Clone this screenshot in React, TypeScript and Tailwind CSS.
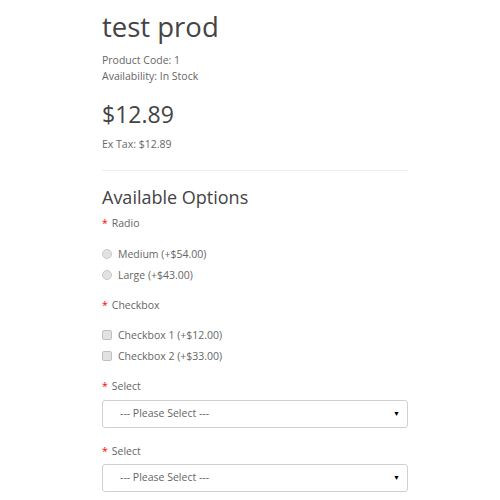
import React from "react";

const font = { fontFamily: '"Open Sans", "Liberation Sans", sans-serif' };

function Required({ label }: { label: string }) {
  return (
    <div className="text-[10.5px] leading-[16px] text-[#666]">
      <span className="text-[#f00] mr-[4px]">*</span>
      {label}
    </div>
  );
}

function Radio({ label }: { label: string }) {
  return (
    <div className="flex items-center h-[16px] text-[10.5px] leading-[16px] text-[#666]">
      <span className="w-[10px] h-[10px] rounded-full bg-[#e2e2e2] border border-[#c8c8c8] mr-[6px] -mt-[1px]" />
      {label}
    </div>
  );
}

function Checkbox({ label }: { label: string }) {
  return (
    <div className="flex items-center h-[16px] text-[10.5px] leading-[16px] text-[#666]">
      <span className="w-[10px] h-[10px] rounded-[2px] bg-[#e2e2e2] border border-[#c0c0c0] mr-[6px]" />
      {label}
    </div>
  );
}

function Select() {
  return (
    <div className="flex items-center justify-between h-[28px] w-[306px] border border-[#d0d0d0] rounded-[3px] bg-white pl-[17px] pr-[7px] text-[10.5px] text-[#666]">
      <span>--- Please Select ---</span>
      <span className="text-[7px] text-black">▼</span>
    </div>
  );
}

export default function App() {
  return (
    <div className="w-[500px] h-[500px] bg-white overflow-hidden" style={font}>
      <div className="pl-[102px] pt-[11px] w-[408px]">
        <h1 className="text-[27.5px] leading-[32px] text-[#444]">test prod</h1>
        <div className="mt-[9px] text-[10.5px] leading-[16px] text-[#666]">
          <div>Product Code: 1</div>
          <div>Availability: In Stock</div>
        </div>
        <div className="mt-[16px] text-[23px] leading-[28px] text-[#444]">$12.89</div>
        <div className="mt-[8px] text-[10.5px] leading-[16px] text-[#666]">Ex Tax: $12.89</div>
        <hr className="mt-[18px] border-t border-[#eee]" />
        <h3 className="mt-[14px] text-[18px] leading-[24px] text-[#444]">Available Options</h3>

        <div className="mt-[6px]">
          <Required label="Radio" />
        </div>
        <div className="mt-[15px] flex flex-col gap-[5px]">
          <Radio label="Medium (+$54.00)" />
          <Radio label="Large (+$43.00)" />
        </div>

        <div className="mt-[14px]">
          <Required label="Checkbox" />
        </div>
        <div className="mt-[14px] flex flex-col gap-[5px]">
          <Checkbox label="Checkbox 1 (+$12.00)" />
          <Checkbox label="Checkbox 2 (+$33.00)" />
        </div>

        <div className="mt-[14px]">
          <Required label="Select" />
        </div>
        <div className="mt-[6px]">
          <Select />
        </div>

        <div className="mt-[15px]">
          <Required label="Select" />
        </div>
        <div className="mt-[5px]">
          <Select />
        </div>
      </div>
    </div>
  );
}
